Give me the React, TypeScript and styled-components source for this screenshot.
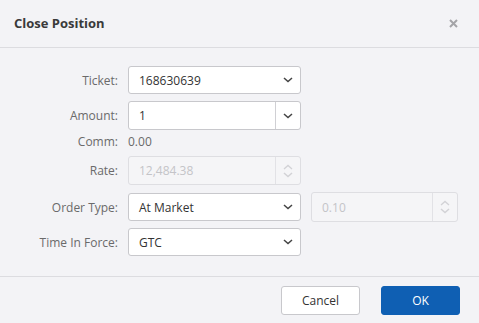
import React from "react"
import styled, { createGlobalStyle } from "styled-components"

const GlobalStyle = createGlobalStyle`
  html, body {
    margin: 0;
    padding: 0;
    background: #f3f3f6;
  }
  body {
    font-family: "Open Sans", "Liberation Sans", sans-serif;
    font-size: 12px;
    color: #333;
  }
`

const Dialog = styled.div`
  width: 479px;
  height: 323px;
  background: #f3f3f6;
  display: flex;
  flex-direction: column;
  box-sizing: border-box;
`

const Header = styled.div`
  height: 47px;
  border-bottom: 1px solid #dcdce0;
  display: flex;
  align-items: center;
  justify-content: space-between;
  padding: 0 20px 0 14px;
  flex-shrink: 0;
`

const Title = styled.div`
  font-size: 13px;
  font-weight: 700;
  color: #3a3a3a;
  margin-top: -1px;
`

const CloseButton = styled.button`
  border: none;
  background: none;
  padding: 0;
  width: 12px;
  height: 12px;
  display: flex;
  align-items: center;
  justify-content: center;
  cursor: pointer;
`

const Body = styled.div`
  flex: 1;
  padding-top: 18px;
  display: flex;
  flex-direction: column;
`

const Row = styled.div<{ $gap: number; $height?: number; $lift?: number }>`
  display: grid;
  grid-template-columns: 118px 173px 147px;
  column-gap: 10px;
  align-items: center;
  box-sizing: border-box;
  height: ${({ $height }) => $height ?? 28}px;
  padding-bottom: ${({ $lift }) => $lift ?? 0}px;
  margin-bottom: ${({ $gap }) => $gap}px;
`

const Label = styled.div`
  text-align: right;
  color: #6a6a6a;
  white-space: nowrap;
`

const Plain = styled.div`
  color: #6a6a6a;
`

const Field = styled.div<{ $disabled?: boolean; $height?: number }>`
  height: ${({ $height }) => $height ?? 28}px;
  box-sizing: border-box;
  border: 1px solid ${({ $disabled }) => ($disabled ? "#dedee2" : "#c8c8cc")};
  border-radius: 3px;
  background: ${({ $disabled }) => ($disabled ? "#f5f5f7" : "#fff")};
  color: ${({ $disabled }) => ($disabled ? "#c4c4c8" : "#333")};
  display: flex;
  align-items: center;
`

const Value = styled.div`
  flex: 1;
  padding-left: 10px;
  white-space: nowrap;
  overflow: hidden;
`

const Addon = styled.div<{ $divider?: boolean; $disabled?: boolean }>`
  width: 24px;
  height: 100%;
  display: flex;
  flex-direction: column;
  align-items: center;
  justify-content: center;
  gap: 2px;
  border-left: ${({ $divider, $disabled }) =>
    $divider ? `1px solid ${$disabled ? "#e2e2e6" : "#d0d0d4"}` : "none"};
`

const Footer = styled.div`
  border-top: 1px solid #dcdce0;
  height: 47px;
  box-sizing: border-box;
  display: flex;
  justify-content: flex-end;
  align-items: flex-start;
  gap: 21px;
  padding: 9px 19px 0 0;
  flex-shrink: 0;
`

const Button = styled.button<{ $primary?: boolean }>`
  width: 79px;
  height: 29px;
  border-radius: 3px;
  font-family: "Open Sans", "Liberation Sans", sans-serif;
  font-size: 12px;
  cursor: pointer;
  border: 1px solid ${({ $primary }) => ($primary ? "#0f5fb3" : "#c8c8cc")};
  background: ${({ $primary }) => ($primary ? "#0f5fb3" : "#fff")};
  color: ${({ $primary }) => ($primary ? "#fff" : "#333")};
`

const ChevronDown = ({ color = "#444" }: { color?: string }) => (
  <svg width="10" height="6" viewBox="0 0 10 6">
    <path d="M1 1 L5 4.6 L9 1" fill="none" stroke={color} strokeWidth="1.5" />
  </svg>
)

const ChevronUp = ({ color = "#ccc" }: { color?: string }) => (
  <svg width="10" height="6" viewBox="0 0 10 6">
    <path d="M1 5 L5 1.4 L9 5" fill="none" stroke={color} strokeWidth="1.3" />
  </svg>
)

const Spinner = ({ color }: { color: string }) => (
  <Addon $divider $disabled>
    <ChevronUp color={color} />
    <ChevronDown color={color} />
  </Addon>
)

export default function App() {
  return (
    <>
      <GlobalStyle />
      <Dialog>
        <Header>
          <Title>Close Position</Title>
          <CloseButton aria-label="close">
            <svg width="9" height="9" viewBox="0 0 9 9">
              <path
                d="M1 1 L8 8 M8 1 L1 8"
                stroke="#a4a4a8"
                strokeWidth="2"
                fill="none"
              />
            </svg>
          </CloseButton>
        </Header>

        <Body>
          <Row $gap={7}>
            <Label>Ticket:</Label>
            <Field>
              <Value>168630639</Value>
              <Addon>
                <ChevronDown />
              </Addon>
            </Field>
          </Row>

          <Row $gap={0} $height={29}>
            <Label>Amount:</Label>
            <Field $height={29}>
              <Value>1</Value>
              <Addon $divider>
                <ChevronDown />
              </Addon>
            </Field>
          </Row>

          <Row $gap={0} $height={26} $lift={3}>
            <Label>Comm:</Label>
            <Plain>0.00</Plain>
          </Row>

          <Row $gap={7} $height={29}>
            <Label>Rate:</Label>
            <Field $disabled $height={29}>
              <Value>12,484.38</Value>
              <Spinner color="#d2d2d6" />
            </Field>
          </Row>

          <Row $gap={7} $height={29}>
            <Label>Order Type:</Label>
            <Field>
              <Value>At Market</Value>
              <Addon>
                <ChevronDown />
              </Addon>
            </Field>
            <Field $disabled $height={30}>
              <Value>0.10</Value>
              <Spinner color="#d2d2d6" />
            </Field>
          </Row>

          <Row $gap={0}>
            <Label>Time In Force:</Label>
            <Field>
              <Value>GTC</Value>
              <Addon>
                <ChevronDown />
              </Addon>
            </Field>
          </Row>
        </Body>

        <Footer>
          <Button>Cancel</Button>
          <Button $primary>OK</Button>
        </Footer>
      </Dialog>
    </>
  )
}
